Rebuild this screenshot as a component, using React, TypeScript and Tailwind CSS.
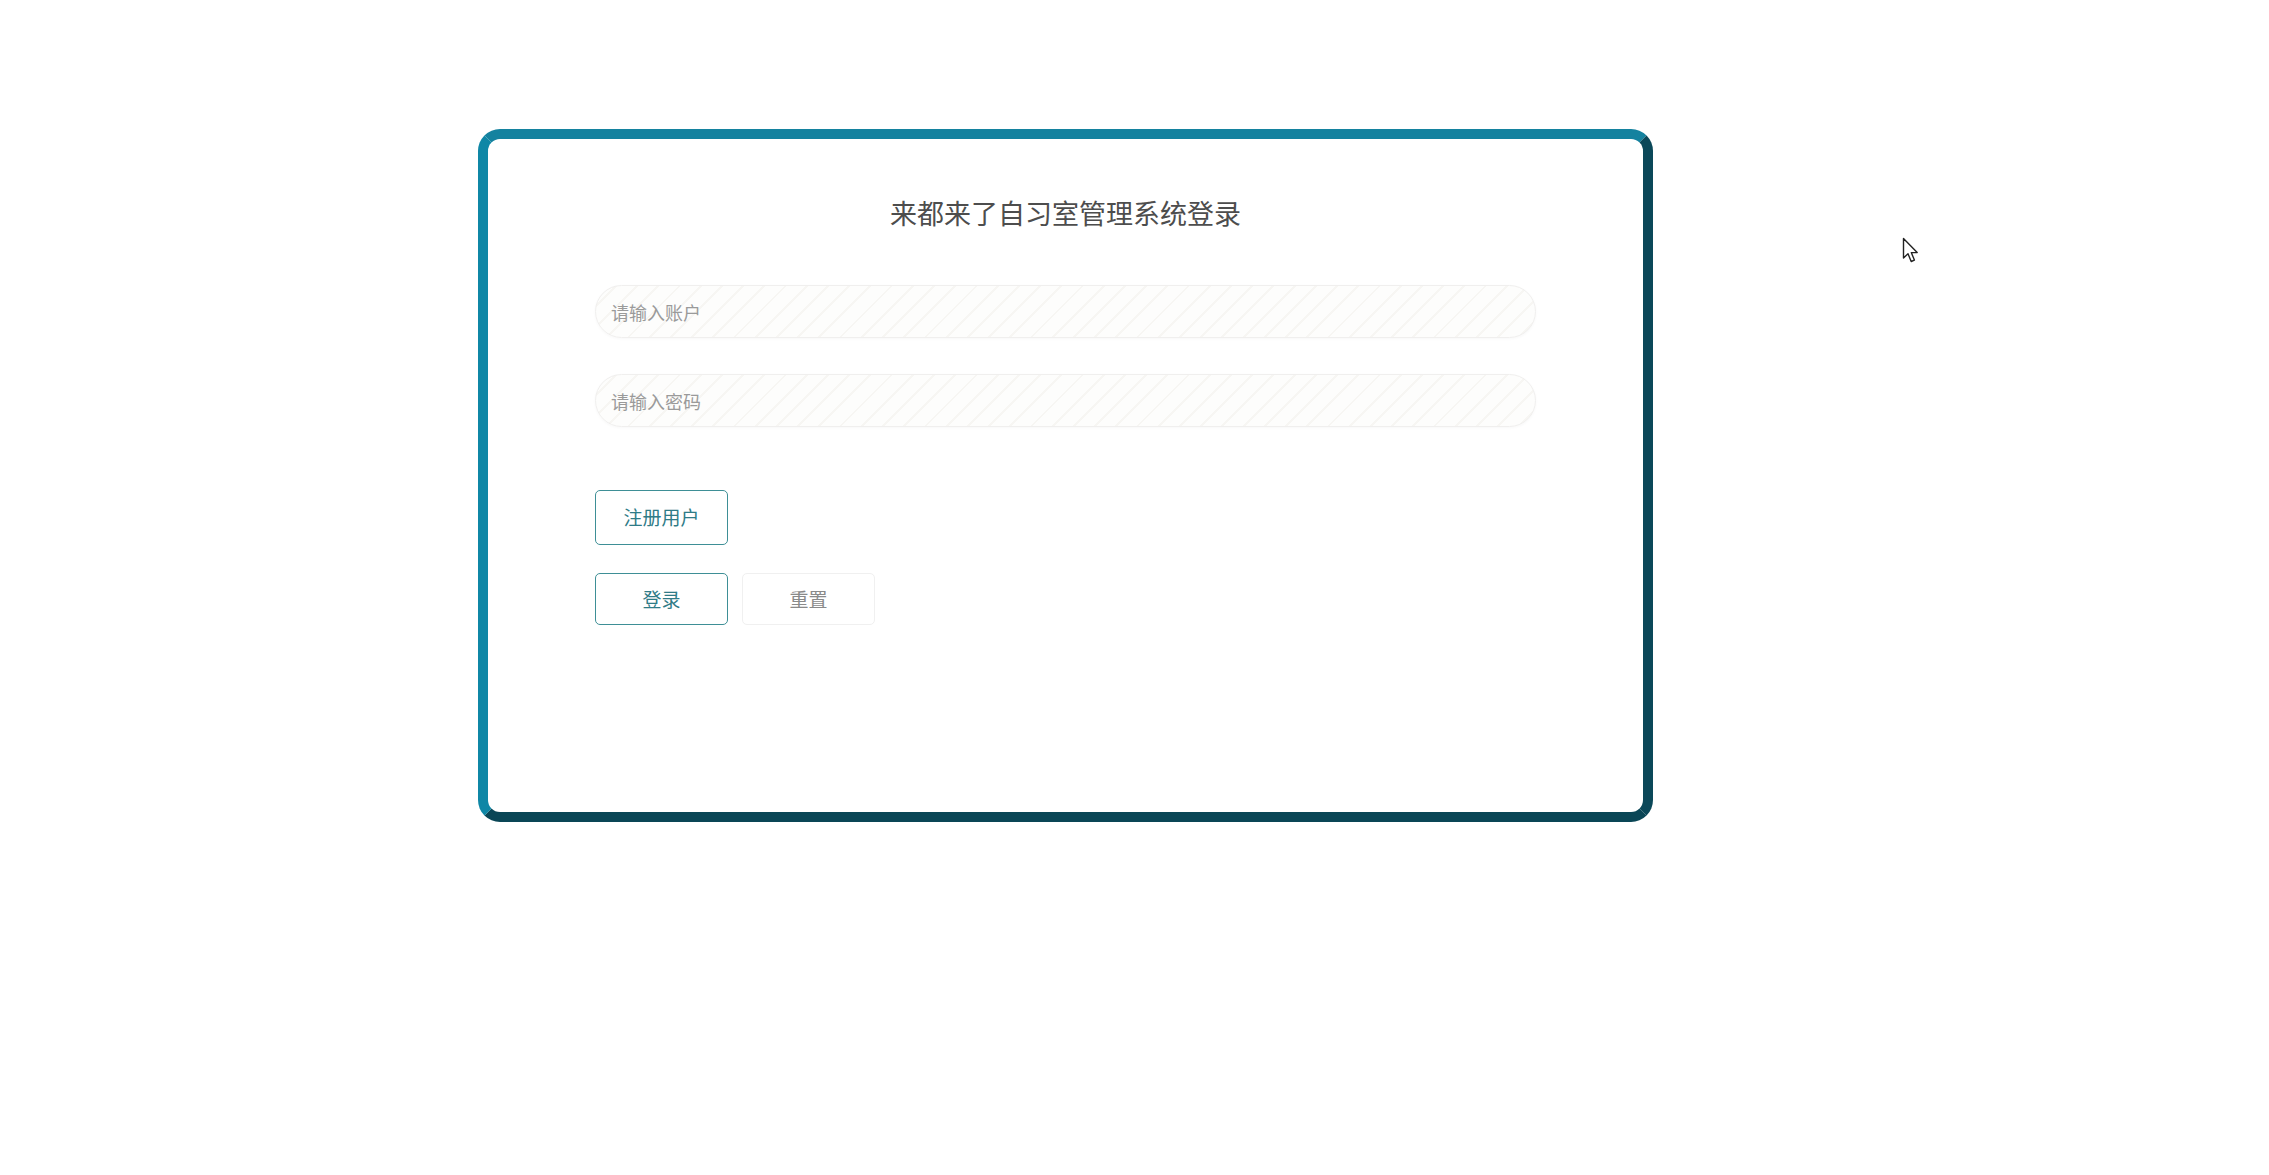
import React from "react";

const font = { fontFamily: '"Noto Sans CJK SC", "Noto Sans", sans-serif' };

function Field({ placeholder }: { placeholder: string }) {
  return (
    <div className="h-[53px] w-full rounded-full border border-[#f0efee] bg-[repeating-linear-gradient(135deg,#fdfdfc_0px,#fdfdfc_13px,#f7f6f3_13px,#f7f6f3_15px)] shadow-[0_1px_3px_rgba(0,0,0,0.03)]">
      <input
        placeholder={placeholder}
        className="h-full w-full rounded-full bg-transparent pl-[15px] text-[18px] text-[#555] outline-none placeholder:text-[#9a9a9a]"
        style={font}
      />
    </div>
  );
}

function Cursor() {
  return (
    <svg
      className="absolute left-[1902px] top-[237px]"
      width="17"
      height="27"
      viewBox="0 0 17 27"
      fill="none"
    >
      <path
        d="M1.5 1.5 L1.5 21 L6 16.8 L9.2 24.5 L12.4 23.1 L9.3 15.6 L15.2 15.6 Z"
        fill="#fff"
        stroke="#222"
        strokeWidth="1.4"
        strokeLinejoin="round"
      />
    </svg>
  );
}

export default function App() {
  return (
    <div className="relative min-h-[1175px] w-full bg-white" style={font}>
      <div className="pl-[478px] pt-[129px]">
        <div className="h-[693px] w-[1175px] rounded-[22px] border-[10px] border-t-[#14829f] border-l-[#0f87a6] border-r-[#0b4859] border-b-[#0a4656] bg-white px-[107px]">
          <h1 className="pt-[56px] text-center text-[27px] leading-[36px] font-normal text-[#4d4d4d]">
            来都来了自习室管理系统登录
          </h1>

          <div className="mt-[54px] flex flex-col gap-[36px]">
            <Field placeholder="请输入账户" />
            <Field placeholder="请输入密码" />
          </div>

          <div className="mt-[63px]">
            <button className="h-[55px] w-[133px] rounded-[5px] border-[1.5px] border-[#3e8f96] bg-white text-[19px] text-[#2f7b87]">
              注册用户
            </button>
          </div>

          <div className="mt-[28px] flex gap-[14px]">
            <button className="h-[52px] w-[133px] rounded-[5px] border-[1.5px] border-[#3e8f96] bg-white text-[19px] text-[#2f7b87]">
              登录
            </button>
            <button className="h-[52px] w-[133px] rounded-[5px] border border-[#f0f0f0] bg-white text-[19px] text-[#8a8a8a]">
              重置
            </button>
          </div>
        </div>
      </div>
      <Cursor />
    </div>
  );
}
